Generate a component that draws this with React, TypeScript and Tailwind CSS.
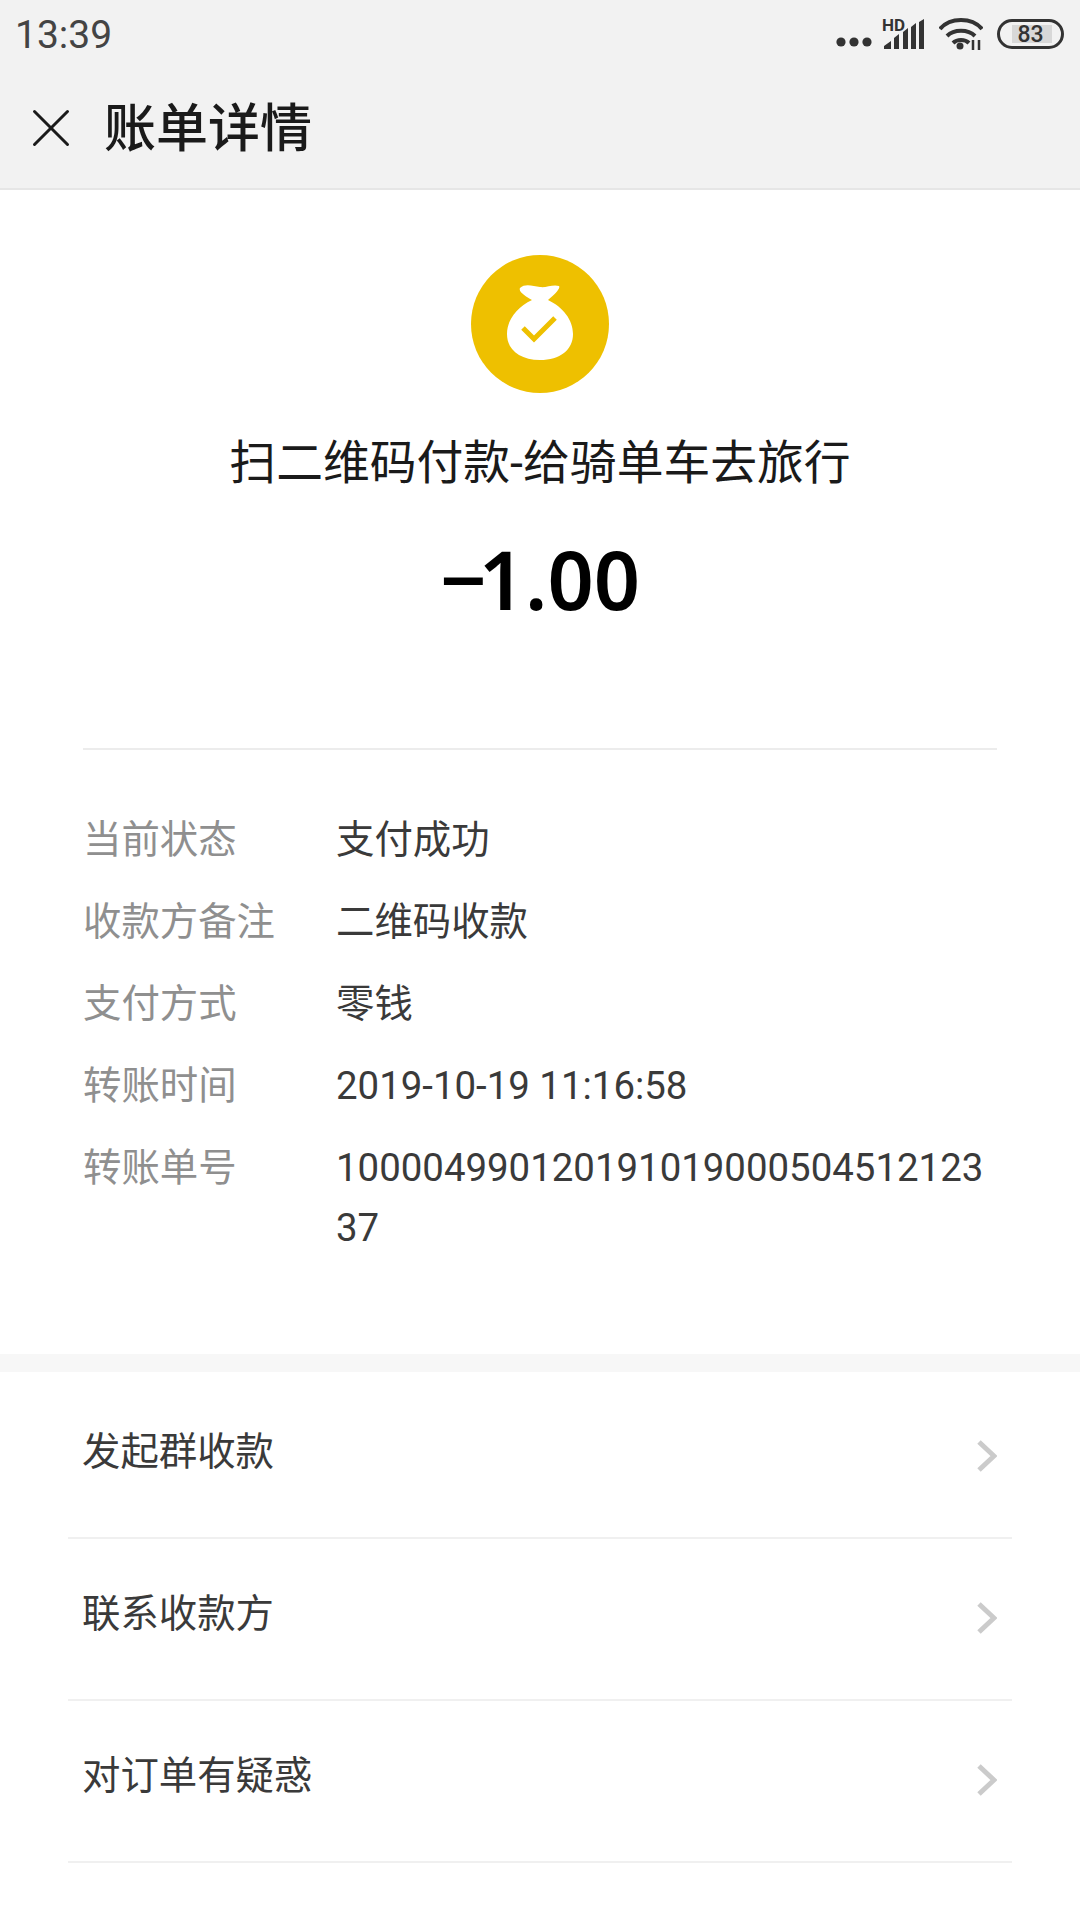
import React from "react";
import { X } from "lucide-react";

const cjk = { fontFamily: '"Roboto", "Noto Sans CJK SC", sans-serif' };

const details = [
  { label: "当前状态", value: "支付成功" },
  { label: "收款方备注", value: "二维码收款" },
  { label: "支付方式", value: "零钱" },
  { label: "转账时间", value: "2019-10-19 11:16:58" },
  { label: "转账单号", value: "10000499012019101900050451212337" },
];

const links = ["发起群收款", "联系收款方", "对订单有疑惑"];

const StatusIcons = () => (
  <div className="flex items-center">
    <svg width="36" height="10" viewBox="0 0 36 10" className="mt-[16px]" fill="#333">
      <circle cx="5" cy="5" r="4.6" />
      <circle cx="18" cy="5" r="4.6" />
      <circle cx="31" cy="5" r="4.6" />
    </svg>
    <svg width="44" height="36" viewBox="0 0 44 36" className="ml-[10px]" fill="#333">
      <text x="0" y="15" fontSize="17" fontWeight="700" fontFamily="Roboto, sans-serif">HD</text>
      <path d="M2 33v-3l7-5v8zM12 33V22l5-4v15zM21 33V16l5-4v21zM29 33V11l5-4v26zM37 33V6l5-3v30z" />
    </svg>
    <svg width="44" height="32" viewBox="0 0 44 32" className="ml-[13px]" fill="none" stroke="#333" strokeWidth="4">
      <path d="M1 11C11-1 33-1 43 11" />
      <path d="M8 18c7-7 21-7 28 0" />
      <path d="M14 25c4-4 12-4 16 0" />
      <circle cx="21" cy="28" r="3.500" fill="#333" stroke="none" />
      <path d="M34 22v10M40 22v10" strokeWidth="2.500" />
    </svg>
    <div className="relative ml-[14px] flex h-[30px] w-[67px] items-center justify-center overflow-hidden rounded-full border-[3px] border-[#333]">
      <div className="absolute left-[12px] top-[3px] h-[18px] w-[40px] bg-[#d8d8d8]" />
      <span className="relative text-[23px] font-medium leading-none text-[#333]">83</span>
    </div>
  </div>
);

const MoneyBag = () => (
  <svg width="138" height="138" viewBox="0 0 138 138">
    <circle cx="69" cy="69" r="69" fill="#eec000" />
    <path
      d="M49 33c5-5 13-2 20-1 6 1 13-3 19-1 2 2-5 9-11 14 15 7 25 20 25 34 0 16-13 26-33 26S36 95 36 79c0-14 10-27 25-34-5-3-14-8-12-12z"
      fill="#fff"
    />
    <path d="M52 73l11 11 21-21" fill="none" stroke="#eec000" strokeWidth="5" />
  </svg>
);

const Chevron = () => (
  <svg width="20" height="32" viewBox="0 0 20 32" fill="none" stroke="#cbcbcb" strokeWidth="5">
    <path d="M2 2l15 14L2 30" />
  </svg>
);

export default function App() {
  return (
    <div className="flex h-[1920px] w-[1080px] flex-col overflow-hidden bg-white" style={cjk}>
      <div className="h-[190px] shrink-0 border-b-2 border-[#e6e6e6] bg-[#f2f2f2]">
        <div className="flex h-[68px] items-center justify-between pl-[15px] pr-[16px]">
          <span className="pt-[2px] text-[39px] leading-none text-[#444]">13:39</span>
          <StatusIcons />
        </div>
        <div className="flex h-[120px] items-center pl-[18px]">
          <X size={66} strokeWidth={3} className="text-[#1a1a1a]" absoluteStrokeWidth />
          <span className="ml-[20px] pt-[4px] text-[52px] font-medium leading-none text-[#1a1a1a]">账单详情</span>
        </div>
      </div>

      <div className="flex flex-col items-center pt-[65px]">
        <MoneyBag />
        <div className="mt-[40px] text-[46.800px] leading-[60px] text-[#1a1a1a]">扫二维码付款-给骑单车去旅行</div>
        <div className="mt-[36px] font-['Noto_Sans'] text-[81px] font-semibold leading-[100px] text-black">
          <span className="tracking-[-8px]">−</span>1.00
        </div>
      </div>

      <div className="mx-[83px] mt-[119px] border-t-2 border-[#ececec]" />

      <div className="flex flex-col gap-[22px] pl-[83px] pr-[90px] pt-[60px]">
        {details.map((row) => (
          <div key={row.label} className="flex text-[38.400px] leading-[60px]">
            <div className="w-[253px] shrink-0 text-[#8f8f8f]">{row.label}</div>
            <div className="min-w-0 break-all text-[#3a3a3a]">{row.value}</div>
          </div>
        ))}
      </div>

      <div className="mt-[96px] h-[18px] shrink-0 bg-[#f7f7f7]" />

      <div className="flex flex-col pt-[5px]">
        {links.map((label) => (
          <div key={label} className="mx-[68px] flex h-[162px] shrink-0 items-center justify-between border-b-2 border-[#f0f0f0] pb-[2px] pl-[14px] pr-[15px]">
            <span className="mb-[8px] text-[38.400px] leading-none text-[#3a3a3a]">{label}</span>
            <Chevron />
          </div>
        ))}
      </div>
    </div>
  );
}
